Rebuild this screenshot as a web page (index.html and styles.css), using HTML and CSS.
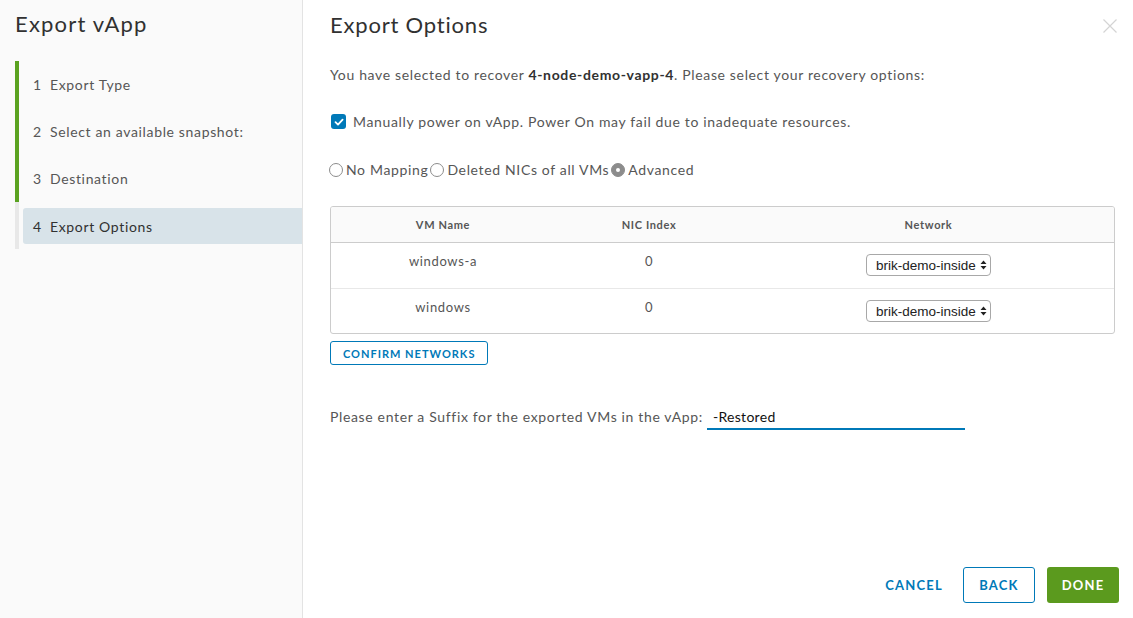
FILE: index.html
```html
<!DOCTYPE html>
<html>
<head>
<meta charset="utf-8">
<link rel="stylesheet" href="styles.css">
</head>
<body>
<div class="modal">
  <aside class="sidebar">
    <h1 class="side-title">Export vApp</h1>
    <ol class="steps">
      <li class="step done"><span class="num">1</span>Export Type</li>
      <li class="step done"><span class="num">2</span>Select an available snapshot:</li>
      <li class="step done"><span class="num">3</span>Destination</li>
      <li class="step current"><span class="label"><span class="num">4</span>Export Options</span></li>
    </ol>
  </aside>
  <main class="content">
    <div class="header">
      <h2 class="title">Export Options</h2>
      <button class="close" aria-label="Close">
        <svg width="16" height="16" viewBox="0 0 16 16"><path d="M1.5 1.5L14.5 14.5M14.5 1.5L1.5 14.5" stroke="#d4d4d4" stroke-width="1.2" fill="none"/></svg>
      </button>
    </div>
    <p class="intro">You have selected to recover <b>4-node-demo-vapp-4</b>. Please select your recovery options:</p>
    <label class="check">
      <span class="box"><svg width="12" height="12" viewBox="0 0 12 12"><path d="M2.5 6.2L5 8.6L9.6 3.6" stroke="#fff" stroke-width="1.8" fill="none" stroke-linecap="round" stroke-linejoin="round"/></svg></span>
      Manually power on vApp. Power On may fail due to inadequate resources.
    </label>
    <div class="radios">
      <label class="radio"><span class="dot"></span>No Mapping</label>
      <label class="radio"><span class="dot"></span>Deleted NICs of all VMs</label>
      <label class="radio"><span class="dot on"></span>Advanced</label>
    </div>
    <div class="grid">
      <div class="row head">
        <div class="c1">VM Name</div>
        <div class="c2">NIC Index</div>
        <div class="c3">Network</div>
      </div>
      <div class="row">
        <div class="c1">windows-a</div>
        <div class="c2">0</div>
        <div class="c3"><span class="select">brik-demo-inside<span class="arrows"><svg width="7" height="10" viewBox="0 0 7 10"><path d="M3.5 0.5L6.5 4H0.5Z M3.5 9.5L6.5 6H0.5Z" fill="#222"/></svg></span></span></div>
      </div>
      <div class="row">
        <div class="c1">windows</div>
        <div class="c2">0</div>
        <div class="c3"><span class="select">brik-demo-inside<span class="arrows"><svg width="7" height="10" viewBox="0 0 7 10"><path d="M3.5 0.5L6.5 4H0.5Z M3.5 9.5L6.5 6H0.5Z" fill="#222"/></svg></span></span></div>
      </div>
    </div>
    <button class="btn-outline small">CONFIRM NETWORKS</button>
    <div class="suffix">
      <span class="suffix-label">Please enter a Suffix for the exported VMs in the vApp:</span>
      <span class="input">-Restored</span>
    </div>
    <div class="spacer"></div>
    <div class="footer">
      <button class="btn-link">CANCEL</button>
      <button class="btn-outline big">BACK</button>
      <button class="btn-primary">DONE</button>
    </div>
  </main>
</div>
</body>
</html>
```

FILE: styles.css
```css
* { box-sizing: border-box; }
html, body { margin: 0; padding: 0; background: #fff; }
body {
  font-family: "Lato", "Noto Sans", sans-serif;
  color: #565656;
  width: 1133px;
  height: 618px;
  overflow: hidden;
  letter-spacing: 0.65px;
}
.modal {
  display: flex;
  height: 618px;
}
.sidebar {
  width: 303px;
  flex: none;
  background: #fafafa;
  border-right: 1px solid #e3e3e3;
  padding: 0 0 0 15px;
}
.side-title {
  margin: 0;
  padding-top: 10px;
  height: 61px;
  font-size: 22px;
  font-weight: 400;
  color: #313131;
  letter-spacing: 1.2px;
}
.steps {
  list-style: none;
  margin: 0;
  padding: 0;
}
.step {
  height: 47px;
  display: flex;
  align-items: center;
  font-size: 14px;
  color: #565656;
  border-left: 4px solid #5aa220;
  padding-left: 14px;
}
.step .num {
  display: inline-block;
  width: 17px;
}
.step.current {
  border-left-color: #e8e8e8;
  padding-left: 4px;
  align-items: stretch;
  padding-top: 6px;
  padding-bottom: 5px;
}
.step.current .label {
  flex: 1;
  background: #d8e3e9;
  border-radius: 3px 0 0 3px;
  display: flex;
  align-items: center;
  padding-left: 10px;
  color: #313131;
}
.content {
  flex: 1;
  padding: 0 14px 15px 27px;
  display: flex;
  flex-direction: column;
}
.header {
  display: flex;
  justify-content: space-between;
  align-items: flex-start;
}
.title {
  margin: 0;
  padding-top: 11px;
  font-size: 22px;
  font-weight: 400;
  color: #313131;
  letter-spacing: 0.8px;
}
.close {
  border: 0;
  background: none;
  padding: 0;
  margin-top: 18px;
  margin-right: 1px;
}
.intro {
  margin: 28px 0 0;
  font-size: 14px;
  color: #565656;
}
.intro b { color: #313131; font-weight: 700; }
.check {
  display: flex;
  align-items: center;
  margin-top: 30px;
  font-size: 14px;
  color: #565656;
  margin-left: 1px;
}
.box {
  width: 15px;
  height: 15px;
  border-radius: 3px;
  background: #0079b8;
  display: inline-flex;
  align-items: center;
  justify-content: center;
  margin-right: 7px;
}
.radios {
  display: flex;
  margin-top: 31px;
  font-size: 14px;
  color: #565656;
  margin-left: -1px;
}
.radio {
  display: inline-flex;
  align-items: center;
  margin-right: 2px;
}
.dot {
  width: 14px;
  height: 14px;
  border-radius: 50%;
  border: 1px solid #8c8c8c;
  background: #fff;
  margin-right: 3px;
  position: relative;
}
.dot.on {
  background: #8c8c8c;
  border-color: #8c8c8c;
}
.dot.on::after {
  content: "";
  position: absolute;
  left: 4px;
  top: 4px;
  width: 4px;
  height: 4px;
  border-radius: 50%;
  background: #fff;
}
.grid {
  margin-top: 28px;
  margin-right: 4px;
  border: 1px solid #ccc;
  border-radius: 3px;
  overflow: hidden;
}
.row {
  display: flex;
  height: 45px;
  border-top: 1px solid #e8e8e8;
  font-size: 13px;
  color: #565656;
}
.row > div {
  text-align: center;
  padding-top: 10px;
}
.row.head {
  border-top: 0;
  height: 36px;
  background: #fafafa;
  border-bottom: 1px solid #ccc;
  font-size: 11px;
  font-weight: 700;
  color: #565656;
}
.row.head > div { padding-top: 11px; }
.row.head + .row { border-top: 0; }
.c1 { width: 224px; }
.c2 { width: 188px; }
.c3 { flex: 1; }
.row .c3 { padding-top: 11px; }
.row.head .c3 { padding-top: 11px; }
.select {
  display: inline-flex;
  align-items: center;
  height: 22px;
  border: 1px solid #a8a8a8;
  border-radius: 4px;
  padding: 0 3px 0 9px;
  font-family: "Liberation Sans", Arial, sans-serif;
  letter-spacing: 0;
  font-size: 13.5px;
  color: #222;
  background: #fff;
}
.arrows { display: inline-flex; margin-left: 4px; }
button { font-family: inherit; cursor: pointer; }
.btn-outline {
  background: #fff;
  border: 1px solid #0079b8;
  color: #0079b8;
  border-radius: 3px;
  font-weight: 700;
  letter-spacing: 1px;
}
.btn-outline.small {
  align-self: flex-start;
  margin-top: 7px;
  height: 24px;
  padding: 0 12px;
  font-size: 11px;
}
.suffix {
  display: flex;
  align-items: flex-start;
  margin-top: 42px;
  font-size: 14px;
  color: #565656;
}
.suffix-label { padding-top: 1px; }
.input {
  margin-left: 4px;
  width: 258px;
  height: 23px;
  border-bottom: 2px solid #0079b8;
  padding: 1px 0 0 6px;
  color: #111;
  letter-spacing: 0.3px;
}
.spacer { flex: 1; }
.footer {
  display: flex;
  justify-content: flex-end;
  align-items: center;
}
.btn-link {
  background: none;
  border: 0;
  color: #0079b8;
  font-size: 13px;
  font-weight: 700;
  letter-spacing: 1.2px;
  margin-right: 20px;
  padding: 0;
}
.btn-outline.big {
  height: 36px;
  width: 72px;
  font-size: 13px;
  letter-spacing: 1.2px;
  margin-right: 12px;
}
.btn-primary {
  height: 36px;
  width: 72px;
  border: 0;
  border-radius: 3px;
  background: #5b9a1e;
  color: #fff;
  font-size: 13px;
  font-weight: 700;
  letter-spacing: 1.2px;
}
```
